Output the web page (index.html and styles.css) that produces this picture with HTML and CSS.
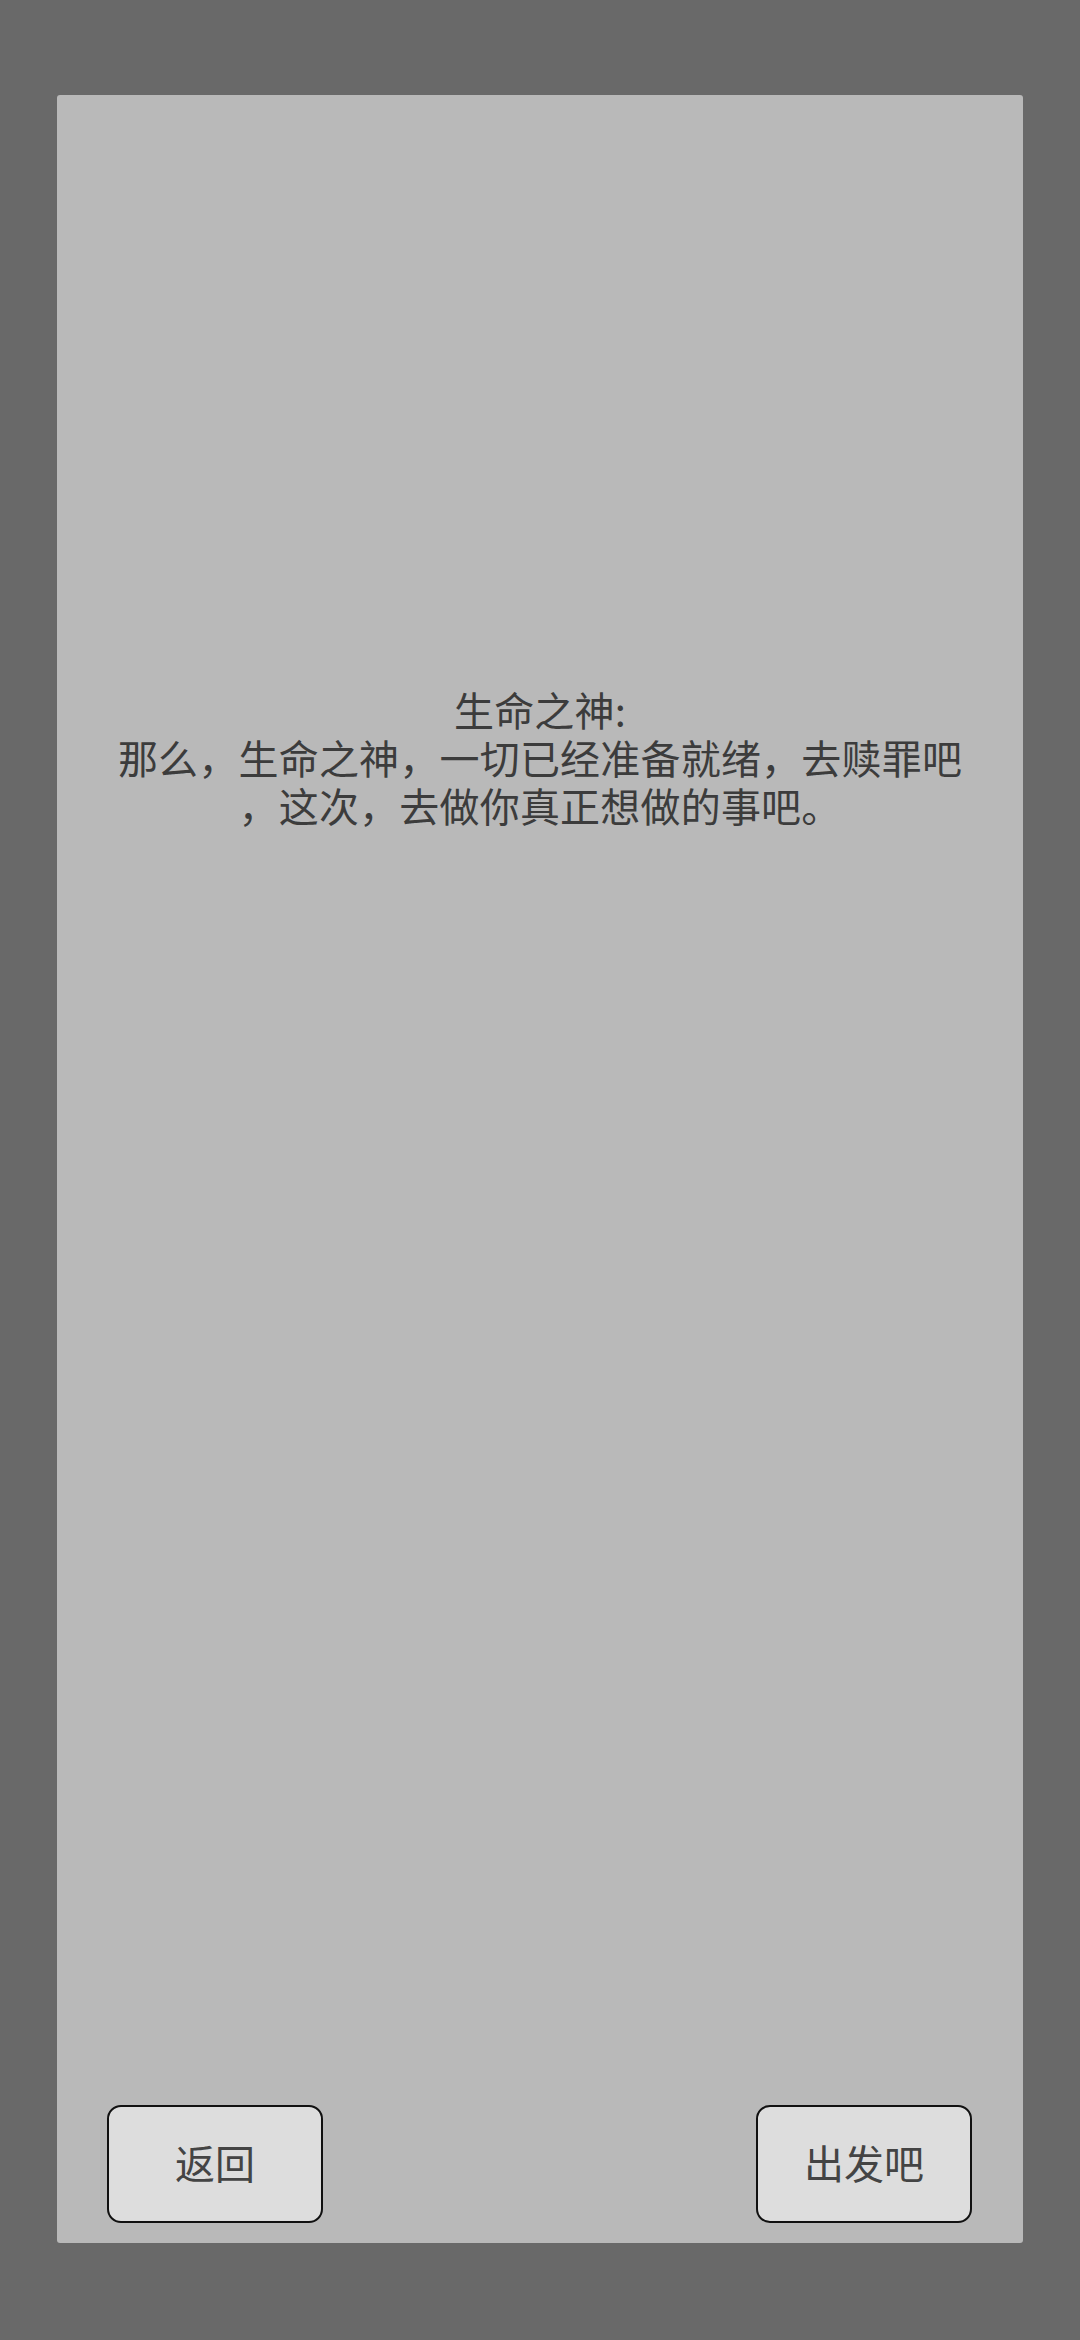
FILE: index.html
```html
<!DOCTYPE html>
<html lang="zh-CN">
<head>
    <meta charset="UTF-8">
    <meta name="viewport" content="width=device-width, initial-scale=1.0">
    <title>出发</title>
    <link rel="stylesheet" href="styles.css">
</head>
<body>
    <div class="panel">
        <div class="dialog">
            <p class="speaker">生命之神:</p>
            <p class="line">那么，生命之神，一切已经准备就绪，去赎罪吧<br>，这次，去做你真正想做的事吧。</p>
        </div>

        <div class="actions">
            <button type="button" class="btn">返回</button>
            <button type="button" class="btn">出发吧</button>
        </div>
    </div>
</body>
</html>
```

FILE: styles.css
```css
html, body {
    height: 100%;
}

body {
    margin: 0;
    background-color: #696969;
    font-family: "Noto Sans CJK SC", "Noto Sans", sans-serif;
    padding: 95px 57px 97px;
    box-sizing: border-box;
}

.panel {
    background-color: #b9b9b9;
    border-radius: 3px;
    height: 100%;
    display: flex;
    flex-direction: column;
}

.dialog {
    flex: 1;
    padding-top: 590px;
    text-align: center;
    color: #3c3c3c;
    font-size: 40px;
    line-height: 48px;
    letter-spacing: 0.2px;
}

.dialog p {
    margin: 0;
}

.actions {
    display: flex;
    justify-content: space-between;
    padding: 0 51px 20px 50px;
}

.btn {
    width: 216px;
    height: 118px;
    background-color: #dddddd;
    border: 2px solid #111;
    border-radius: 14px;
    color: #444;
    font-family: inherit;
    font-size: 40px;
    padding: 0 0 4px;
    cursor: pointer;
}
```
